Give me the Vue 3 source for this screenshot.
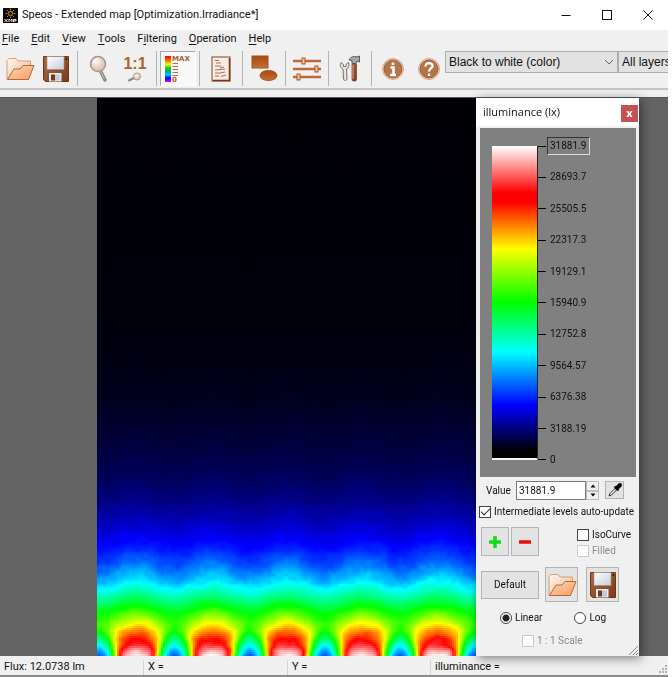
<script setup>
import { onMounted, ref } from 'vue'

const menus = [
  ['', 'F', 'ile'],
  ['', 'E', 'dit'],
  ['', 'V', 'iew'],
  ['', 'T', 'ools'],
  ['F', 'i', 'ltering'],
  ['', 'O', 'peration'],
  ['', 'H', 'elp'],
]
const levels = ['31881.9', '28693.7', '25505.5', '22317.3', '19129.1', '15940.9', '12752.8', '9564.57', '6376.38', '3188.19', '0']
const level = ref('31881.9')
const autoUpdate = ref(true)
const mode = ref('linear')
const map = ref(null)

const stops = [
  [0, 0, 0],
  [0, 0, 255],
  [0, 255, 255],
  [0, 255, 0],
  [255, 255, 0],
  [255, 0, 0],
  [255, 255, 255],
]
const W = 380
const H = 558
const PITCH = 75.4

// [row, value under a source, value between two sources]
const profile = [
  [0, 0.003, 0.003],
  [200, 0.007, 0.007],
  [270, 0.014, 0.013],
  [302, 0.021, 0.019],
  [352, 0.044, 0.04],
  [382, 0.067, 0.061],
  [402, 0.092, 0.083],
  [422, 0.128, 0.115],
  [440, 0.168, 0.15],
  [452, 0.2, 0.175],
  [465, 0.25, 0.21],
  [476, 0.3, 0.25],
  [484, 0.34, 0.29],
  [492, 0.39, 0.34],
  [508, 0.51, 0.45],
  [516, 0.585, 0.5],
  [525, 0.675, 0.525],
  [532, 0.75, 0.48],
  [540, 0.83, 0.38],
  [547, 0.88, 0.29],
  [552, 0.95, 0.23],
  [558, 1, 0.18],
]

function sample(y) {
  let i = 1
  while (i < profile.length - 1 && profile[i][0] < y) i++
  const a = profile[i - 1]
  const b = profile[i]
  const t = (y - a[0]) / (b[0] - a[0])
  return [a[1] + (b[1] - a[1]) * t, a[2] + (b[2] - a[2]) * t]
}

function hash(x, y) {
  const n = Math.sin(x * 127.1 + y * 311.7) * 43758.5453
  return n - Math.floor(n)
}

function noise(x, y) {
  const ix = Math.floor(x)
  const iy = Math.floor(y)
  const fx = x - ix
  const fy = y - iy
  const top = hash(ix, iy) * (1 - fx) + hash(ix + 1, iy) * fx
  const low = hash(ix, iy + 1) * (1 - fx) + hash(ix + 1, iy + 1) * fx
  return top * (1 - fy) + low * fy - 0.5
}

function irradiance(x, y) {
  const [peak, valley] = sample(y)
  let d = (((x - 39) % PITCH) + PITCH) % PITCH
  d = Math.min(d, PITCH - d)
  const wide = 0.5 + 0.5 * Math.cos((2 * Math.PI * d) / PITCH)
  const radius = 28 - Math.max(0, y - 530) * 0.2
  const lobe = 1 / (1 + Math.pow(d / radius, 6))
  const s = Math.max(0, Math.min(1, (y - 512) / 20))
  const w = wide * (1 - s) + (lobe * 0.85 + wide * 0.15) * s
  const rim = 0.03 * s * Math.min(1, (d / 16) ** 2) * w
  const v = valley + (peak - valley) * w - rim
  const grain = noise(x / 9, y / 6) * 0.09 + noise(x / 4 + 50, y / 4) * 0.06
  return v * (1 + grain * (y > 490 ? 0.4 : 1))
}

onMounted(() => {
  const ctx = map.value.getContext('2d')
  const image = ctx.createImageData(W, H)
  for (let y = 0; y < H; y++) {
    for (let x = 0; x < W; x++) {
      const v = Math.max(0, Math.min(0.9999, irradiance(x - (x % 2), y - (y % 2)))) * 6
      const i = Math.floor(v)
      const p = (y * W + x) * 4
      for (let c = 0; c < 3; c++) image.data[p + c] = stops[i][c] + (stops[i + 1][c] - stops[i][c]) * (v - i)
      image.data[p + 3] = 255
    }
  }
  ctx.putImageData(image, 0, 0)
})
</script>

<template>
  <div class="window">
    <svg class="defs" aria-hidden="true">
      <defs>
        <linearGradient id="g-paper" x1="0" y1="0" x2="1" y2="1">
          <stop offset="0" stop-color="#fff6ee" /><stop offset="1" stop-color="#f0b48a" />
        </linearGradient>
        <linearGradient id="g-front" x1="0" y1="0" x2="1" y2="1">
          <stop offset="0" stop-color="#ffd9b8" /><stop offset="1" stop-color="#fb9a5c" />
        </linearGradient>
        <linearGradient id="g-brown" x1="0" y1="0" x2="1" y2="1">
          <stop offset="0" stop-color="#a86a45" /><stop offset="1" stop-color="#7c3a18" />
        </linearGradient>
        <linearGradient id="g-rust" x1="0" y1="0" x2="0" y2="1">
          <stop offset="0" stop-color="#a8480f" /><stop offset="1" stop-color="#c56f36" />
        </linearGradient>
        <linearGradient id="g-metal" x1="0" y1="0" x2="1" y2="1">
          <stop offset="0" stop-color="#ffffff" /><stop offset="1" stop-color="#c3cde0" />
        </linearGradient>
        <radialGradient id="g-lens" cx="0.4" cy="0.35" r="0.7">
          <stop offset="0" stop-color="#fff3ea" /><stop offset="1" stop-color="#d9b5a0" />
        </radialGradient>
        <linearGradient id="g-hue" x1="0" y1="0" x2="0" y2="1">
          <stop offset="0" stop-color="#f00" /><stop offset="0.2" stop-color="#ff8000" />
          <stop offset="0.32" stop-color="#ff0" /><stop offset="0.45" stop-color="#2c2" />
          <stop offset="0.6" stop-color="#0a8" /><stop offset="0.72" stop-color="#0cf" />
          <stop offset="0.85" stop-color="#00f" /><stop offset="1" stop-color="#f0f" />
        </linearGradient>
        <symbol id="i-open" viewBox="0 0 30 24">
          <path d="M2 22.500V3.500L4 1.500H11L13 4H25.500V12L10 15Z" fill="url(#g-paper)" stroke="#c98d68" stroke-width="0.800" />
          <path d="M2.500 22.500L9 12H15L18 8.500H29L23.500 22.500Z" fill="url(#g-front)" stroke="#b26a3c" stroke-linejoin="round" />
        </symbol>
        <symbol id="i-save" viewBox="0 0 26 26">
          <path d="M0.500 0.500H25.500V25.500H2.500L0.500 23.500Z" fill="url(#g-brown)" stroke="#6e3416" />
          <rect x="4" y="0.500" width="17" height="13" fill="url(#g-metal)" stroke="#b08a78" stroke-width="0.600" />
          <rect x="22.500" y="2" width="1.500" height="2" fill="#3a1806" />
          <path d="M6 25.500V17H18.500V25.500Z" fill="#e4e8f0" />
          <rect x="8" y="18.500" width="4" height="6" fill="#6a3a22" />
          <rect x="12" y="18.500" width="5" height="6" fill="#c2cadb" />
        </symbol>
      </defs>
    </svg>

    <header class="titlebar">
      <svg class="logo" viewBox="0 0 15 15" aria-hidden="true">
        <rect width="15" height="15" fill="#0a0806" />
        <circle cx="7.500" cy="5.500" r="2" fill="none" stroke="#d08a18" />
        <path d="M7.500 0.500V2.500M7.500 8.500V10M2.500 5.500H4.500M10.500 5.500H12.500M4 2L5.500 3.500M11 2L9.500 3.500M4 9L5.500 7.500M11 9L9.500 7.500" stroke="#c98013" />
        <path d="M1.500 11L4.500 14M4.500 11L1.500 14M6 14V11L7.500 12.500L9 11V14M10.500 14V11.500H13V13H10.500" fill="none" stroke="#fff" stroke-width="0.900" />
      </svg>
      <h1>Speos - Extended map [Optimization.Irradiance*]</h1>
      <div class="winbtns">
        <button aria-label="Minimize"><svg viewBox="0 0 12 12"><path d="M1.500 6.500H10.500" /></svg></button>
        <button aria-label="Maximize"><svg viewBox="0 0 12 12"><rect x="1.500" y="1.500" width="9" height="9" /></svg></button>
        <button aria-label="Close"><svg viewBox="0 0 12 12"><path d="M1.500 1.500L10.500 10.500M10.500 1.500L1.500 10.500" /></svg></button>
      </div>
    </header>

    <nav class="menubar">
      <button v-for="m in menus" :key="m[1] + m[2]">{{ m[0] }}<u>{{ m[1] }}</u>{{ m[2] }}</button>
    </nav>

    <div class="toolbar">
      <button class="tool" aria-label="Open"><svg width="30" height="24"><use href="#i-open" /></svg></button>
      <button class="tool" aria-label="Save"><svg width="26" height="26"><use href="#i-save" /></svg></button>
      <i class="sep"></i>
      <button class="tool" aria-label="Zoom">
        <svg width="20" height="28" viewBox="0 0 20 28">
          <path d="M11 15L16 25" stroke="#8d8784" stroke-width="3.500" stroke-linecap="round" />
          <path d="M11.500 16L15.500 24" stroke="#c5c0bd" stroke-width="1" />
          <circle cx="9" cy="9" r="7.500" fill="url(#g-lens)" stroke="#a39a95" stroke-width="1.600" />
          <path d="M4.500 8A5 5 0 0 1 9 4" fill="none" stroke="#fff" stroke-width="1.500" />
        </svg>
      </button>
      <button class="tool one" aria-label="Actual size">
        <b>1:1</b>
        <svg width="16" height="10" viewBox="0 0 16 10">
          <path d="M7 6L2 8.500" stroke="#8d8784" stroke-width="2" stroke-linecap="round" />
          <circle cx="10" cy="4.500" r="3.500" fill="url(#g-lens)" stroke="#a39a95" />
        </svg>
      </button>
      <i class="sep"></i>
      <button class="tool pressed" aria-label="Color scale">
        <svg width="28" height="28" viewBox="0 0 28 28">
          <rect x="1" y="1" width="6" height="26" fill="url(#g-hue)" />
          <path d="M8.500 8.500H14M8.500 11.500H14M8.500 14.500H14M8.500 17.500H14M8.500 20.500H14" stroke="#b5703f" />
          <text x="8" y="6" font-size="7">MAX</text>
          <text x="8" y="27" font-size="7">0</text>
        </svg>
      </button>
      <i class="sep"></i>
      <button class="tool" aria-label="Report">
        <svg width="20" height="26" viewBox="0 0 20 26">
          <rect x="1" y="1" width="18" height="24" fill="#fbeadf" stroke="#a4785f" stroke-width="1.400" />
          <path d="M18.500 2V24.500H2" fill="none" stroke="#713a20" stroke-width="1.500" />
          <path d="M4 4.500H8M5 7H10M4 10H10M9 12L13 11M4 14L14 13M4 17H9L14 16M4 20H8M10 20.500L15 19" fill="none" stroke="#a8755c" />
        </svg>
      </button>
      <i class="sep"></i>
      <button class="tool" aria-label="Shapes">
        <svg width="27" height="27" viewBox="0 0 27 27">
          <rect x="1" y="1" width="16" height="12" fill="url(#g-rust)" stroke="#a8521e" />
          <ellipse cx="17.500" cy="20.500" rx="8.500" ry="5" fill="url(#g-rust)" stroke="#a8521e" />
        </svg>
      </button>
      <i class="sep"></i>
      <button class="tool" aria-label="Adjust levels">
        <svg width="28" height="24" viewBox="0 0 28 24">
          <path d="M0 4H28M0 12H28M0 20H28" stroke="#b96a38" stroke-width="2.600" />
          <g fill="#f5c6a4" stroke="#b5571c">
            <rect x="9" y="1" width="3" height="6" /><rect x="22" y="9" width="3" height="6" /><rect x="4" y="17" width="3" height="6" />
          </g>
        </svg>
      </button>
      <i class="sep"></i>
      <button class="tool" aria-label="Preferences">
        <svg width="22" height="27" viewBox="0 0 22 27">
          <path d="M2 7.500C0.500 10 1.500 13 4 14L4.500 24C5 26 7.500 26 8 24L7.500 14C10 13 10.500 10 9.500 7.500L7 9.500V11.500H4.500V9.500Z" fill="#e5e2df" stroke="#77716d" />
          <rect x="13" y="8" width="4.500" height="18" rx="1.500" fill="url(#g-brown)" stroke="#713a20" stroke-width="0.700" />
          <path d="M10 5C12 1.500 15 1 18 2L20.500 1V7L18 6L17 8.500H13V5.500Z" fill="#aaa7a6" stroke="#5e5956" />
          <path d="M14 10V24" stroke="#dba17b" />
        </svg>
      </button>
      <i class="sep"></i>
      <button class="tool" aria-label="Information">
        <svg width="24" height="24" viewBox="0 0 24 24">
          <circle cx="12" cy="12" r="10.500" fill="#f3d5c1" stroke="#d9a988" />
          <circle cx="12" cy="12" r="9" fill="#b47649" stroke="#9c5f36" />
          <path d="M12 5.500V8M9.500 10.500H12.500V17.500M9 18H15" fill="none" stroke="#fff" stroke-width="2.600" />
        </svg>
      </button>
      <button class="tool" aria-label="Help">
        <svg width="24" height="24" viewBox="0 0 24 24">
          <circle cx="12" cy="12" r="10.500" fill="#f3d5c1" stroke="#d9a988" />
          <circle cx="12" cy="12" r="9" fill="#b47649" stroke="#9c5f36" />
          <path d="M8.500 9.500C8.500 5 15.500 5 15.500 9C15.500 11.500 12 11.500 12 14.500M12 16.500V19" fill="none" stroke="#fff" stroke-width="2.300" />
        </svg>
      </button>
      <select class="colors" aria-label="Color palette"><option>Black to white (color)</option></select>
      <select class="layers" aria-label="Layer"><option>All layers</option></select>
    </div>

    <main class="viewer">
      <div class="image"><canvas ref="map" :width="W" :height="H"></canvas></div>

      <section class="panel">
        <header class="panel-title">
          <h2>illuminance (lx)</h2>
          <button aria-label="Close panel">x</button>
        </header>
        <div class="scale">
          <div class="ramp"></div>
          <ul>
            <li v-for="(l, i) in levels" :key="l"><span :class="{ current: i === 0 }">{{ l }}</span></li>
          </ul>
        </div>
        <div class="value-row">
          <label for="level">Value</label>
          <input id="level" v-model="level" type="text" />
          <div class="spin">
            <button aria-label="Increase"><svg viewBox="0 0 6 4"><path d="M0.500 3.500H5.500L3 0.500Z" /></svg></button>
            <button aria-label="Decrease"><svg viewBox="0 0 6 4"><path d="M0.500 0.500H5.500L3 3.500Z" /></svg></button>
          </div>
          <button class="btn pick" aria-label="Pick value">
            <svg width="16" height="16" viewBox="0 0 16 16">
              <path d="M2 14L3 11.500L8.500 6L10 7.500L4.500 13Z" fill="#fff" stroke="#222" />
              <path d="M7.500 4.500L11.500 8.500" stroke="#000" stroke-width="2" />
              <path d="M10 6L13 3" stroke="#000" stroke-width="4" stroke-linecap="round" />
            </svg>
          </button>
        </div>
        <label class="check auto"><input v-model="autoUpdate" type="checkbox" />Intermediate levels auto-update</label>
        <div class="edit-row">
          <button class="btn small" aria-label="Add level"><svg width="14" height="14" viewBox="0 0 14 14"><path d="M7 1V13M1 7H13" stroke="#14d914" stroke-width="3.500" /></svg></button>
          <button class="btn small" aria-label="Remove level"><svg width="14" height="14" viewBox="0 0 14 14"><path d="M1 7H13" stroke="#e80f0f" stroke-width="3.500" /></svg></button>
          <div class="iso">
            <label class="check"><input type="checkbox" />IsoCurve</label>
            <label class="check off"><input type="checkbox" disabled />Filled</label>
          </div>
        </div>
        <div class="file-row">
          <button class="btn default">Default</button>
          <button class="btn file" aria-label="Load scale"><svg width="30" height="24"><use href="#i-open" /></svg></button>
          <button class="btn file" aria-label="Save scale"><svg width="26" height="26"><use href="#i-save" /></svg></button>
        </div>
        <div class="mode-row">
          <label class="check"><input v-model="mode" type="radio" value="linear" />Linear</label>
          <label class="check"><input v-model="mode" type="radio" value="log" />Log</label>
        </div>
        <label class="check off ratio"><input type="checkbox" disabled />1 : 1 Scale</label>
        <svg class="grip" viewBox="0 0 9 9" aria-hidden="true"><path d="M0 9L9 0M4 9L9 4M7 9L9 7" /></svg>
      </section>
    </main>

    <footer class="status">
      <span>Flux: 12.0738 lm</span>
      <span>X =</span>
      <span>Y =</span>
      <span>illuminance =</span>
      <svg class="dots" viewBox="0 0 8 8" aria-hidden="true"><path d="M6 0H8V2H6ZM3 3H5V5H3ZM6 3H8V5H6ZM0 6H2V8H0ZM3 6H5V8H3ZM6 6H8V8H6Z" /></svg>
    </footer>
  </div>
</template>

<style>
body {
  margin: 0;
  background: #fff;
}
</style>

<style scoped>
* {
  box-sizing: border-box;
}
.window {
  display: flex;
  flex-direction: column;
  height: 100vh;
  margin-right: 4px;
  overflow: hidden;
  background: #f0f0f0;
  color: #111;
  font: 11px/14px 'Roboto', sans-serif;
  border-bottom: 2px solid #8c8c8c;
}
.defs {
  position: absolute;
  width: 0;
  height: 0;
}
button {
  display: flex;
  align-items: center;
  justify-content: center;
  padding: 0;
  border: 0;
  background: none;
  color: inherit;
  font: inherit;
}
svg {
  flex: none;
}
.titlebar {
  display: flex;
  align-items: center;
  height: 30px;
  flex: none;
  padding-left: 3px;
  background: #fff;
}
.logo {
  width: 15px;
  height: 15px;
  margin-right: 4px;
}
h1,
h2 {
  margin: 0;
  font: inherit;
}
h1 {
  flex: 1;
}
.winbtns {
  display: flex;
}
.winbtns button {
  width: 41px;
  height: 30px;
}
.winbtns svg {
  width: 12px;
  height: 12px;
  fill: none;
  stroke: #111;
}
.menubar {
  display: flex;
  flex: none;
  gap: 12px;
  height: 18px;
  padding-left: 2px;
}
.menubar u {
  text-underline-offset: 2px;
}
.toolbar {
  display: flex;
  align-items: flex-start;
  flex: none;
  height: 42px;
  padding: 3px 0 0 2px;
  border-bottom: 2px solid #c4c4c4;
}
.tool {
  flex: none;
  width: 36px;
  height: 35px;
}
.one {
  flex-direction: column;
  color: #b0622c;
}
.one b {
  font: bold 16px/16px 'Liberation Sans', sans-serif;
}
.pressed {
  background: #f8f8f8;
  border: 1px solid #a9a9a9;
  border-right-color: #fff;
  border-bottom-color: #fff;
}
.pressed text {
  font-family: 'DejaVu Sans', sans-serif;
  font-weight: bold;
  fill: #ab5f2c;
}
.sep {
  flex: none;
  width: 1px;
  height: 35px;
  margin: 0 3px;
  background: #b4b4b4;
}
select {
  appearance: none;
  flex: none;
  height: 22px;
  margin: 0;
  padding: 0 3px;
  border: 1px solid #adadad;
  border-radius: 0;
  background-color: #e2e2e2;
  color: #111;
  font: 12px/18px 'Liberation Sans', sans-serif;
}
.colors {
  width: 173px;
  margin-left: -2px;
  background-image: linear-gradient(45deg, transparent 50%, #666 50%, #666 65%, transparent 65%), linear-gradient(-45deg, transparent 50%, #666 50%, #666 65%, transparent 65%);
  background-size: 4px 5px;
  background-position: right 8px center, right 4px center;
  background-repeat: no-repeat;
}
.layers {
  width: 120px;
}
.viewer {
  display: flex;
  flex: 1;
  min-height: 0;
  margin-top: 7px;
  padding: 0 29px 0 97px;
  background: #646464;
  border-top: 1px solid #555;
}
.image {
  flex: 1;
  min-width: 0;
}
canvas {
  display: block;
  width: 100%;
  height: 100%;
}
.panel {
  position: relative;
  display: flex;
  flex-direction: column;
  width: 163px;
  background: #f0f0f0;
  font: 10px/14px 'Roboto', sans-serif;
  white-space: nowrap;
  box-shadow: 2px 2px 10px rgba(0, 0, 0, 0.5);
}
.panel-title {
  display: flex;
  align-items: center;
  justify-content: space-between;
  flex: none;
  height: 30px;
  padding: 0 1px 0 7px;
  border-bottom: 2px solid #f0f0f0;
  background: #fff;
  font: 11px/14px 'Open Sans', sans-serif;
}
.panel-title button {
  width: 17px;
  height: 17px;
  margin-top: 2px;
  background: #c75050;
  color: #fff;
  font-weight: bold;
}
.scale {
  display: flex;
  flex: 1;
  min-height: 0;
  margin: 0 3px 0 4px;
  padding: 9px 0 8px 12px;
  background: #808080;
}
.ramp {
  width: 46px;
  margin: 9px 0;
  border-right: 1px solid #222;
  border-bottom: 2px solid #f4f4f4;
  background: linear-gradient(#fff 0%, #f00 15%, #f00 18%, #ff0 33%, #0f0 50%, #0ff 66%, #00f 83%, #000 98%);
}
.scale ul {
  display: flex;
  flex-direction: column;
  justify-content: space-between;
  margin: 0;
  padding: 0;
  list-style: none;
}
.scale li {
  display: flex;
  align-items: center;
  height: 18px;
}
.scale li::before {
  content: '';
  width: 8px;
  height: 1px;
  margin-right: 1px;
  background: #000;
}
.scale span {
  padding: 1px 3px 1px 2px;
  border: 1px solid transparent;
}
.scale .current {
  border-color: #333 #ddd #ddd #333;
}
.value-row {
  display: flex;
  flex: none;
  height: 19px;
  margin-top: 4px;
  padding-left: 10px;
}
.value-row label {
  width: 30px;
  line-height: 19px;
}
.value-row input {
  width: 70px;
  padding: 0 2px;
  border: 1px solid #7a7a7a;
  border-radius: 0;
  background: #fff;
  color: #111;
  font: inherit;
}
.spin {
  display: flex;
  flex-direction: column;
  width: 13px;
  margin-right: 6px;
}
.spin button {
  flex: 1;
  border: 1px solid #bcbcbc;
}
.spin svg {
  width: 6px;
  height: 4px;
}
.btn {
  border: 1px solid #b4b4b4;
  background: #e3e3e3;
}
.pick {
  width: 19px;
  height: 18px;
}
.check {
  display: flex;
  align-items: center;
  gap: 3px;
  height: 16px;
  flex: none;
}
.check input {
  appearance: none;
  display: flex;
  align-items: center;
  justify-content: center;
  width: 12px;
  height: 12px;
  margin: 0;
  border: 1px solid #444;
  background: #fff;
}
.check input[type='checkbox']:checked::before {
  content: '';
  width: 8px;
  height: 4px;
  margin-bottom: 3px;
  border: solid #222;
  border-width: 0 0 1px 1px;
  transform: rotate(-45deg);
}
.check input[type='radio'] {
  border-radius: 50%;
}
.check input[type='radio']:checked {
  background: radial-gradient(circle, #222 0 3px, #fff 4px);
}
.off {
  color: #8a8a8a;
}
.check.off input {
  border-color: #ccc;
}
.auto {
  margin: 4px 0 7px 3px;
}
.edit-row {
  display: flex;
  flex: none;
  gap: 2px;
  height: 29px;
  padding-left: 5px;
}
.small {
  width: 28px;
}
.iso {
  margin: 0 0 0 36px;
}
.file-row {
  display: flex;
  align-items: center;
  flex: none;
  height: 35px;
  margin-top: 11px;
  padding-left: 5px;
}
.default {
  width: 58px;
  height: 28px;
  margin-right: 6px;
}
.file {
  width: 33px;
  height: 35px;
  margin-right: 8px;
}
.mode-row {
  display: flex;
  flex: none;
  gap: 32px;
  margin-top: 8px;
  padding-left: 24px;
}
.ratio {
  margin: 7px 0 7px 46px;
}
.grip {
  position: absolute;
  right: 1px;
  bottom: 1px;
  width: 9px;
  height: 9px;
  stroke: #888;
}
.status {
  display: grid;
  grid-template-columns: 144px 144px 143px 1fr auto;
  flex: none;
  height: 19px;
  padding: 4px 0 0;
}
.status span {
  padding-left: 4px;
  border-right: 1px solid #d4d4d4;
}
.status span:nth-child(4) {
  border: 0;
}
.dots {
  align-self: end;
  width: 8px;
  height: 8px;
  margin: 0 1px 2px 0;
  fill: #b4b4b4;
}
</style>
